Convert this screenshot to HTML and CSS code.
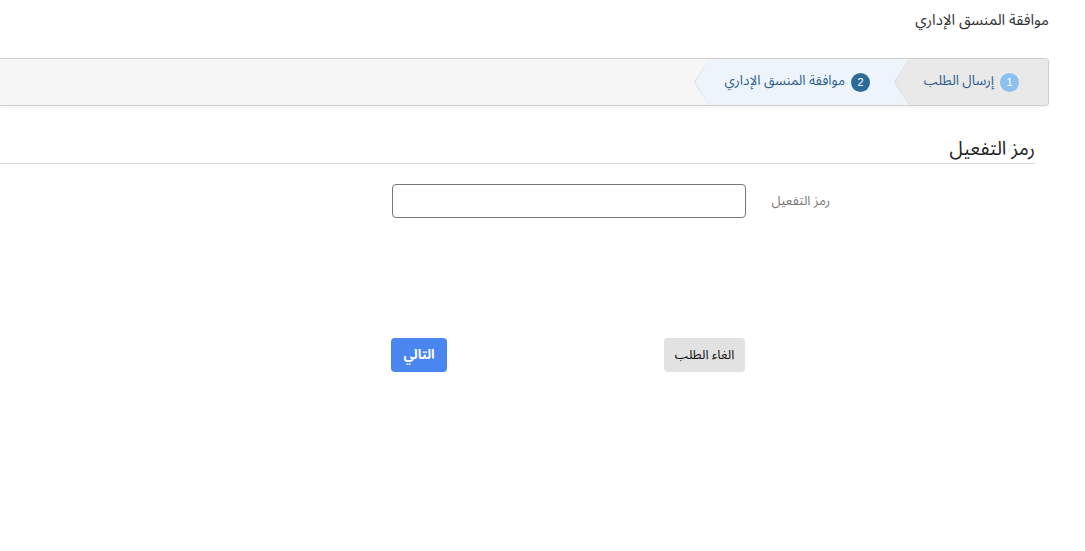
FILE: index.html
```html
<!DOCTYPE html>
<html lang="ar" dir="rtl">
<head>
<meta charset="utf-8">
<link rel="stylesheet" href="styles.css">
</head>
<body>
<div class="page">
  <h1 class="title">موافقة المنسق الإداري</h1>
  <div class="wizard">
    <div class="step step-done">
      <span class="badge badge-light">1</span>
      <span class="step-text">إرسال الطلب</span>
    </div>
    <div class="step step-current">
      <span class="badge badge-dark">2</span>
      <span class="step-text">موافقة المنسق الإداري</span>
    </div>
  </div>
  <div class="section">
    <h2 class="section-title">رمز التفعيل</h2>
    <div class="form-row">
      <label class="label" for="code">رمز التفعيل</label>
      <div class="field">
        <input id="code" class="input" type="text">
      </div>
    </div>
    <div class="actions-row">
      <div class="actions">
        <button class="btn btn-cancel" type="button">الغاء الطلب</button>
        <button class="btn btn-next" type="button">التالي</button>
      </div>
    </div>
  </div>
</div>
</body>
</html>
```

FILE: styles.css
```css
* { box-sizing: border-box; }
html, body { margin: 0; padding: 0; background: #fff; }
body {
  font-family: "Noto Sans Arabic", "Noto Sans", "DejaVu Sans", sans-serif;
  color: #333;
  direction: rtl;
  overflow: hidden;
}
.page {
  padding-right: 36px;
  padding-top: 8px;
}
.title {
  margin: 0;
  font-size: 15px;
  font-weight: 400;
  color: #333;
  line-height: 24px;
  height: 50px;
}
.wizard {
  display: flex;
  height: 48px;
  background: #f6f6f6;
  border: 1px solid #cfcfcf;
  border-left: none;
  border-radius: 0 4px 4px 0;
  box-shadow: 0 2px 3px rgba(0,0,0,0.04);
}
.step {
  position: relative;
  display: flex;
  align-items: center;
  gap: 6px;
  height: 100%;
  font-size: 13.5px;
  color: #2f5f8f;
}
.step-done {
  width: 139px;
  padding-right: 29px;
  background: #e9e9e9;
  border-radius: 0 3px 3px 0;
  z-index: 2;
}
.step-current {
  width: 200px;
  padding-right: 39px;
  background: #eef4fb;
  z-index: 1;
}
.step::before,
.step::after {
  content: "";
  position: absolute;
  top: 0;
  width: 0;
  height: 0;
  border-top: 23px solid transparent;
  border-bottom: 23px solid transparent;
}
.step::before {
  left: -15px;
  border-right: 15px solid #d4d8de;
}
.step::after {
  left: -14px;
  border-right: 14px solid #e9e9e9;
}
.step-current::after { border-right-color: #eef4fb; }
.step-current::before { border-right-color: #d5dce5; }
.badge {
  display: inline-flex;
  align-items: center;
  justify-content: center;
  width: 19px;
  height: 19px;
  border-radius: 50%;
  color: #fff;
  font-size: 11px;
  font-family: "Liberation Sans", Arial, sans-serif;
}
.badge-light { background: #8cc0ef; }
.badge-dark { background: #2c6a98; }
.step-text { line-height: 1; padding-bottom: 2px; }

.section { padding-top: 29px; }
.section-title {
  margin: 0 14px 0 -40px;
  font-size: 19px;
  font-weight: 400;
  color: #222;
  line-height: 28px;
  border-bottom: 1px solid #ddd;
  height: 29px;
}
.form-row {
  display: flex;
  align-items: center;
  margin-top: 20px;
  height: 34px;
}
.label {
  box-sizing: content-box;
  width: 84px;
  padding-right: 219px;
  font-size: 13px;
  color: #777;
}
.field { width: 354px; }
.input {
  display: block;
  width: 354px;
  height: 34px;
  border: 1px solid #777;
  border-radius: 4px;
  background: #fff;
  outline: none;
}
.actions-row {
  padding-right: 304px;
  margin-top: 120px;
}
.actions {
  width: 354px;
  display: flex;
  justify-content: space-between;
}
.btn {
  height: 34px;
  border: none;
  border-radius: 4px;
  font-family: inherit;
  font-size: 13px;
  cursor: pointer;
}
.btn-cancel {
  width: 81px;
  background: #e2e2e2;
  color: #111;
}
.btn-next {
  width: 56px;
  background: #4a86f0;
  color: #fff;
  font-weight: 700;
}
```
